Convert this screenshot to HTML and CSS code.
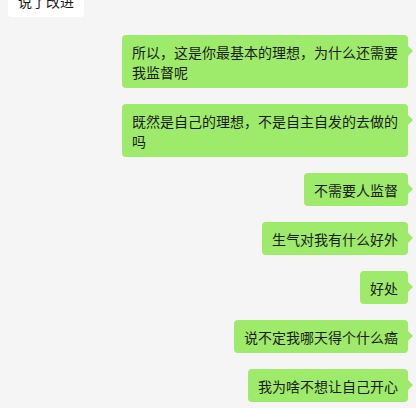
FILE: index.html
```html
<!DOCTYPE html>
<html lang="zh-CN">
<head>
    <meta charset="UTF-8">
    <meta name="viewport" content="width=device-width, initial-scale=1.0">
    <title>聊天</title>
    <link rel="stylesheet" href="styles.css">
</head>
<body>
    <div class="chat">
        <div class="msg received">说了改进</div>
        <div class="msg sent">所以，这是你最基本的理想，为什么还需要我监督呢</div>
        <div class="msg sent">既然是自己的理想，不是自主自发的去做的吗</div>
        <div class="msg sent">不需要人监督</div>
        <div class="msg sent">生气对我有什么好外</div>
        <div class="msg sent">好处</div>
        <div class="msg sent">说不定我哪天得个什么癌</div>
        <div class="msg sent">我为啥不想让自己开心</div>
    </div>
</body>
</html>
```
FILE: styles.css
```css
body {
    margin: 0;
    padding: 0;
    background-color: #f5f5f5;
    font-family: "Microsoft YaHei", "Noto Sans CJK SC", sans-serif;
    overflow: hidden;
}

.chat {
    display: flex;
    flex-direction: column;
    gap: 16px;
    padding: 0 8px 0 8px;
}

.msg {
    position: relative;
    max-width: 266px;
    padding: 7px 10px 6px 10px;
    font-size: 14px;
    line-height: 20px;
    color: #1b1b1b;
    border-radius: 4px;
}

.received {
    align-self: flex-start;
    background-color: #ffffff;
    margin-top: -16px;
    margin-bottom: 2px;
}

.sent {
    align-self: flex-end;
    background-color: #9eea6a;
}

.sent::after {
    content: "";
    position: absolute;
    top: 11px;
    right: -5px;
    border-left: 5px solid #9eea6a;
    border-top: 5px solid transparent;
    border-bottom: 5px solid transparent;
}
```
